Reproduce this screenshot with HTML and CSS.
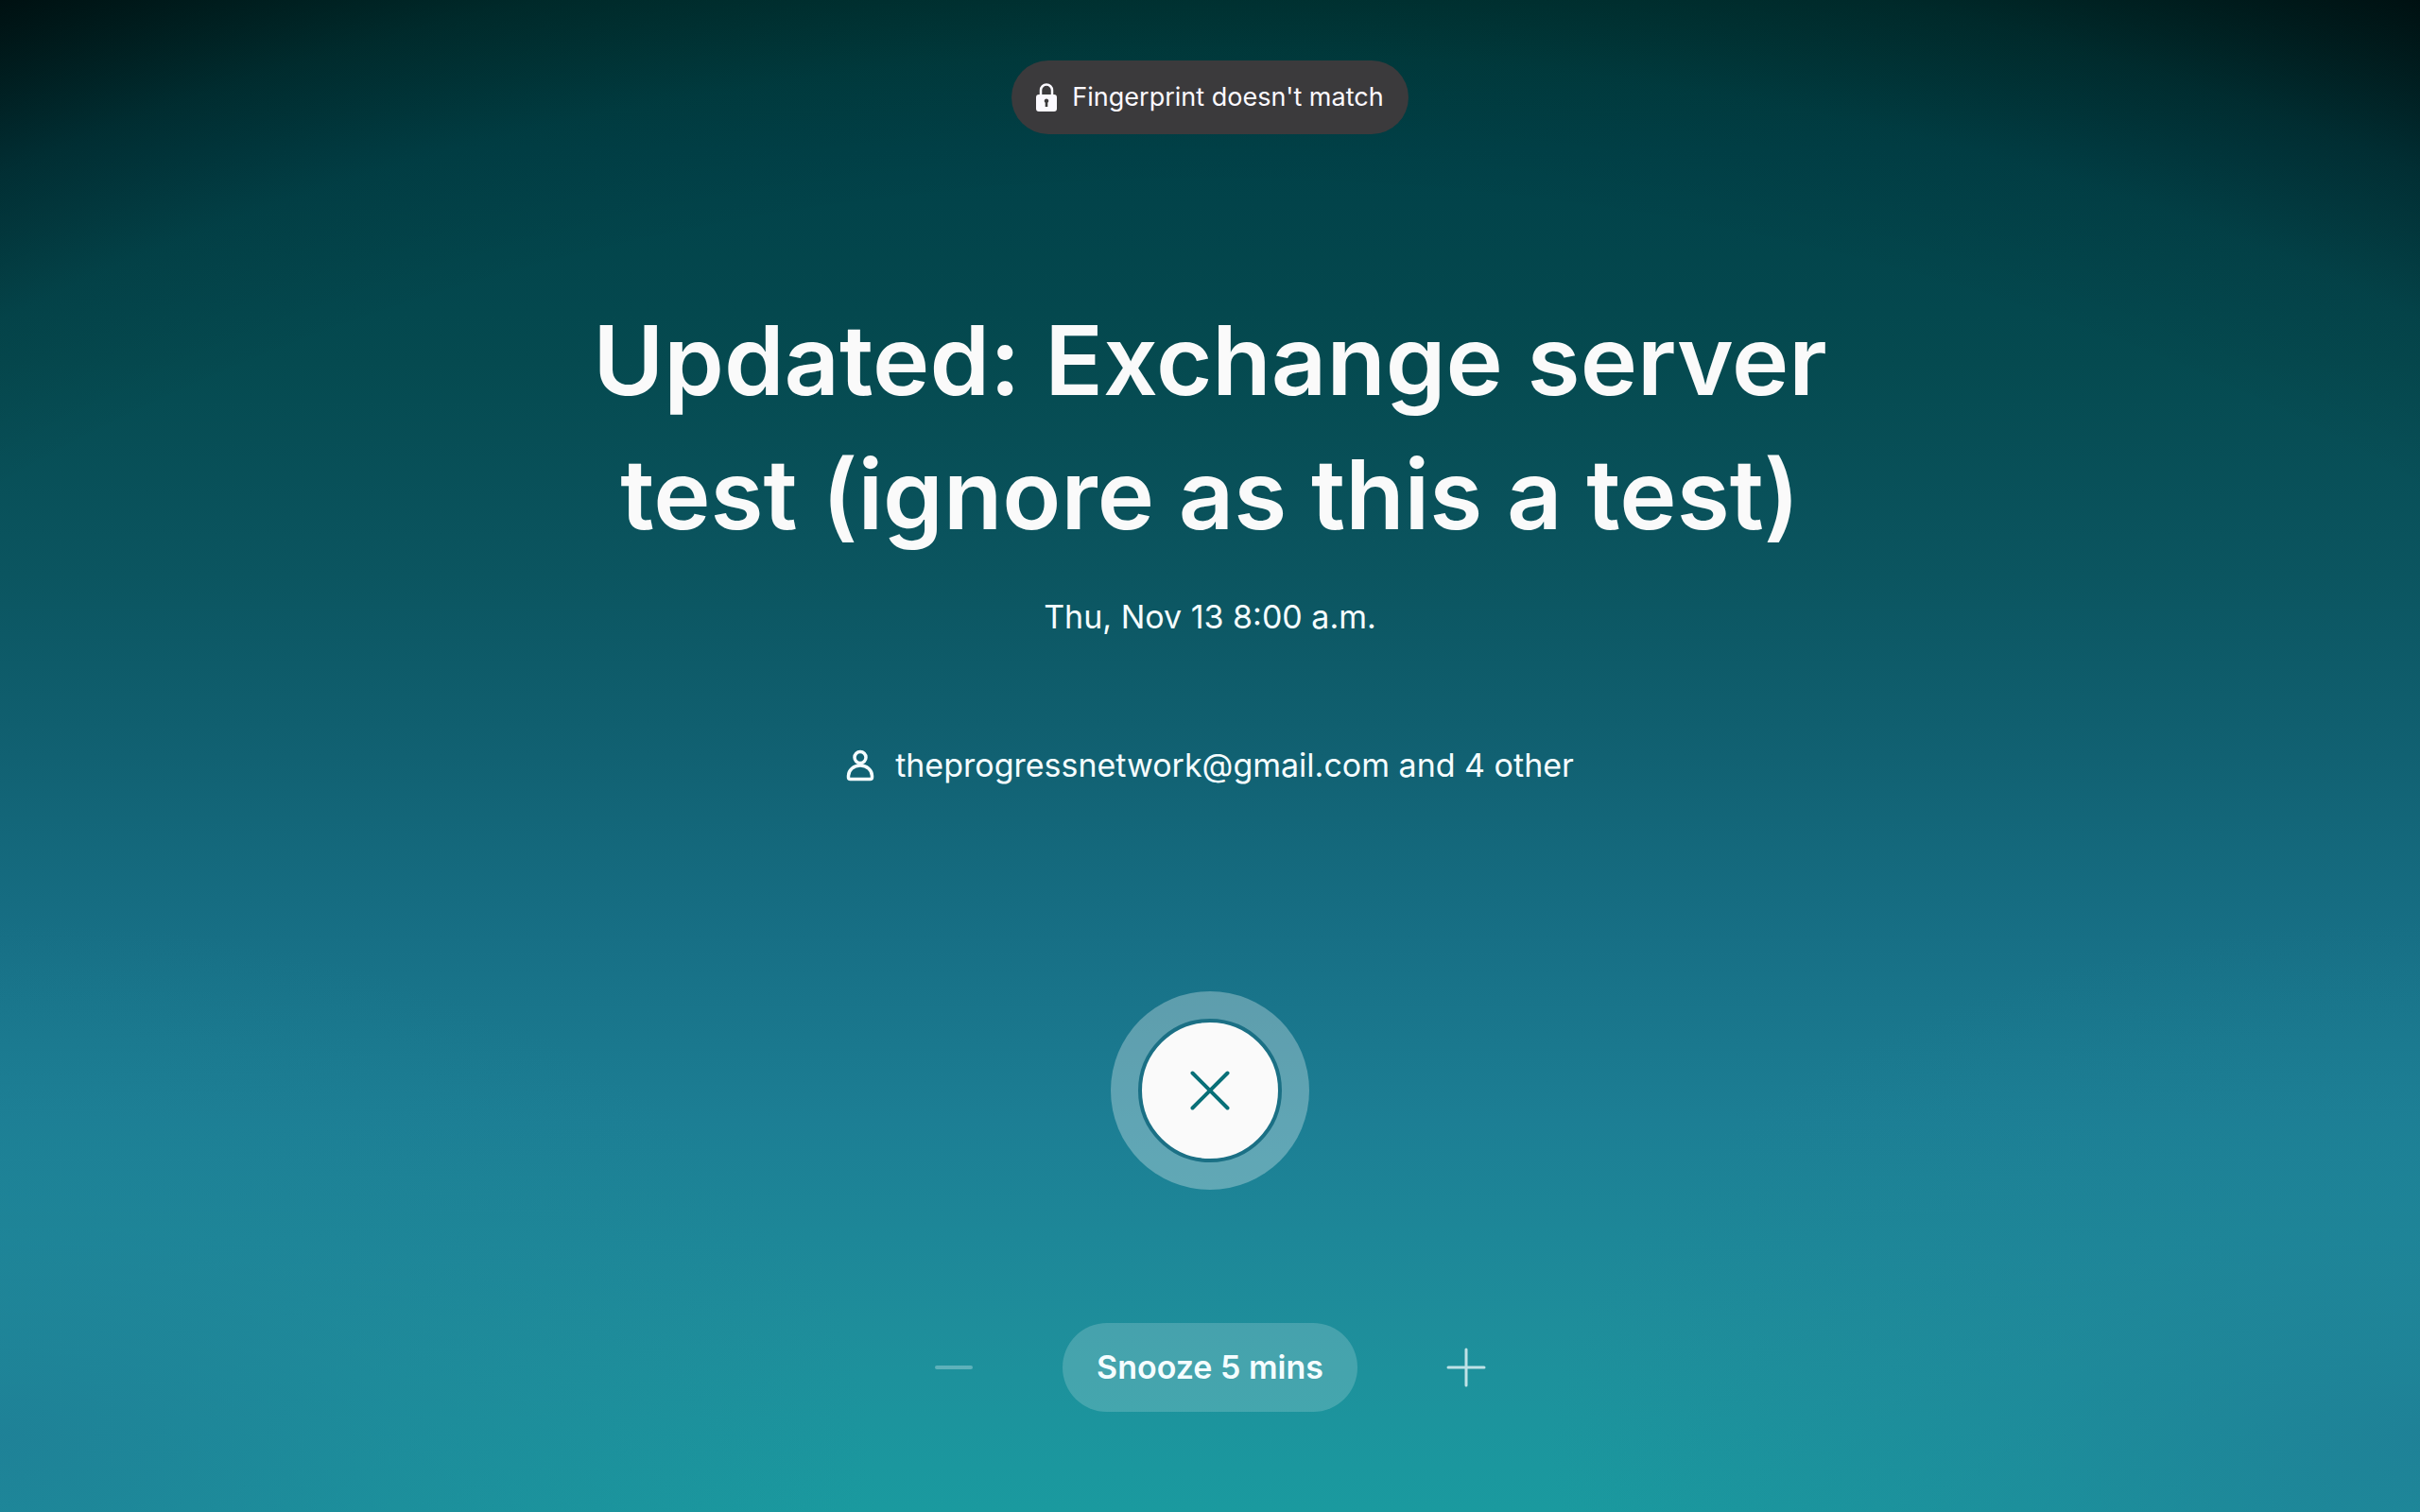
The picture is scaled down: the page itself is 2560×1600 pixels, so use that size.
FILE: index.html
```html
<!DOCTYPE html>
<html lang="en">
<head>
<meta charset="utf-8">
<meta name="viewport" content="width=device-width, initial-scale=1">
<title>Calendar alert</title>
<link rel="stylesheet" href="styles.css">
</head>
<body>
<main class="alert">
  <div class="status" role="status">
    <svg class="status-icon" viewBox="0 0 22 30" aria-hidden="true">
      <path d="M5 13V7.500a6 6 0 0 1 12 0V13" fill="none" stroke="currentColor" stroke-width="2.500"/>
      <path fill="currentColor" fill-rule="evenodd" d="M3 12h16a3 3 0 0 1 3 3v12a3 3 0 0 1-3 3H3a3 3 0 0 1-3-3V15a3 3 0 0 1 3-3zm8 4.500a2.300 2.300 0 0 0-1.300 4.200V25h2.600v-4.300A2.300 2.300 0 0 0 11 16.500z"/>
    </svg>
    <span>Fingerprint doesn't match</span>
  </div>

  <h1 class="title">Updated: Exchange server test (ignore as this a test)</h1>
  <time class="date" datetime="11-13T08:00">Thu, Nov 13 8:00 a.m.</time>

  <p class="people">
    <svg class="people-icon" viewBox="0 0 30 34" fill="none" stroke="currentColor" stroke-width="3.500" aria-hidden="true">
      <circle cx="15" cy="8.500" r="6"/>
      <path d="M15 17c-7 0-12.500 5-12.500 11v1.500q0 2 2 2h21q2 0 2-2V28c0-6-5.500-11-12.500-11z"/>
    </svg>
    <span>theprogressnetwork@gmail.com and 4 other</span>
  </p>

  <button class="dismiss" type="button" aria-label="Dismiss">
    <span class="dismiss-core">
      <svg class="dismiss-icon" viewBox="0 0 42 42" fill="none" stroke="currentColor" stroke-width="4" stroke-linecap="round" aria-hidden="true">
        <path d="M2.500 2.500l37 37M39.500 2.500l-37 37"/>
      </svg>
    </span>
  </button>

  <div class="snooze">
    <button class="step" type="button" aria-label="Less time" disabled>
      <svg class="step-icon" viewBox="0 0 42 42" fill="none" stroke="currentColor" stroke-width="4" stroke-linecap="round" aria-hidden="true"><path d="M3 21h36"/></svg>
    </button>
    <button class="snooze-button" type="button">Snooze 5 mins</button>
    <button class="step" type="button" aria-label="More time">
      <svg class="step-icon" viewBox="0 0 42 42" fill="none" stroke="currentColor" stroke-width="3" stroke-linecap="round" aria-hidden="true"><path d="M2 21h38M21 2v38"/></svg>
    </button>
  </div>
</main>
</body>
</html>
```
FILE: styles.css
```css
* { box-sizing: border-box; }

body {
  margin: 0;
  min-height: 100vh;
  color: #f5fdff;
  font-family: Inter, "Open Sans", sans-serif;
  font-size: 34px;
  line-height: 48px;
  background:
    radial-gradient(ellipse 103% 115% at 50% 100%, rgba(0, 6, 7, 0) 76%, rgba(0, 6, 7, 0.08) 84%, rgba(0, 6, 7, 0.32) 91%, rgba(0, 6, 7, 0.82) 100%),
    radial-gradient(ellipse 36% 34% at 0 95%, rgba(31, 126, 150, 0.85), rgba(31, 130, 152, 0.45) 45%, rgba(31, 134, 154, 0)),
    radial-gradient(ellipse 36% 34% at 100% 95%, rgba(31, 126, 150, 0.85), rgba(31, 130, 152, 0.45) 45%, rgba(31, 134, 154, 0)),
    linear-gradient(#003a3a 0%, #014148 10%, #054a50 24%, #0b5560 38%, #116172 50%, #176f85 62%, #1c7e94 74%, #1e8e9b 88%, #1a9a9f 100%);
}

button {
  border: 0;
  padding: 0;
  background: none;
  color: inherit;
  font: inherit;
}

.alert {
  display: flex;
  flex-direction: column;
  align-items: center;
  padding: 64px 32px;
}

.status {
  display: flex;
  align-items: center;
  gap: 16px;
  padding: 14px 26px;
  border-radius: 40px;
  background: #3b3a3c;
  color: #fbf9ff;
  font-size: 27px;
  line-height: 50px;
}

.status-icon { width: 22px; height: 30px; }

.title {
  max-width: 1400px;
  margin: 168px 0 35px;
  color: #fafafa;
  font-size: 102px;
  font-weight: 600;
  line-height: 142px;
  text-align: center;
}

.people {
  display: flex;
  align-items: center;
  gap: 22px;
  margin: 109px 0 215px;
}

.people-icon { width: 30px; height: 34px; }

.dismiss {
  display: grid;
  place-items: center;
  width: 210px;
  height: 210px;
  border-radius: 50%;
  background: rgba(255, 255, 255, 0.3);
}

.dismiss-core {
  display: grid;
  place-items: center;
  width: 152px;
  height: 152px;
  border: 4px solid #1b7085;
  border-radius: 50%;
  background: #fafafa;
  color: #087078;
}

.dismiss-icon { width: 42px; height: 42px; }

.snooze {
  display: flex;
  align-items: center;
  gap: 94px;
  margin-top: 141px;
}

.step {
  display: grid;
  opacity: 0.75;
}

.step:disabled { opacity: 0.3; }

.step-icon { width: 42px; height: 42px; }

.snooze-button {
  padding: 23px 36px;
  border-radius: 47px;
  background: rgba(255, 255, 255, 0.18);
  font-weight: 600;
}
```
